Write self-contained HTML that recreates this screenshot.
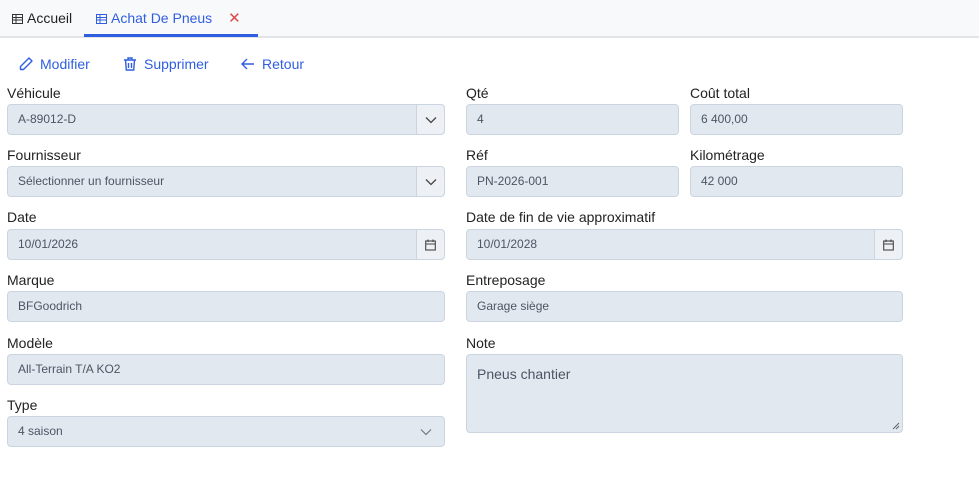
<!DOCTYPE html>
<html><head><style>
*{box-sizing:border-box;margin:0;padding:0}
body{width:979px;height:477px;background:#fff;font-family:"Liberation Sans",sans-serif;position:relative;overflow:hidden;color:#222}
.tabs{position:absolute;left:0;top:0;width:979px;height:38px;background:#f8f9fa;border-bottom:2px solid #e2e4e8}
.tab{position:absolute;top:0;height:37px;line-height:36px;font-size:14px}
.act{position:absolute;top:9px;font-size:14px;color:#2f5fe0}
.act svg{vertical-align:-3px;margin-right:6px}
.lbl{position:absolute;font-size:14px;color:#222}
.in{position:absolute;height:31px;background:#e2e8f0;border:1px solid #cbd5e1;border-radius:4px;font-size:12px;color:#4b5563;line-height:29px;padding-left:10px}
.btn{position:absolute;right:0;top:0;width:28px;height:29px;background:#edf1f6;border-left:1px solid #cbd5e1;border-radius:0 4px 4px 0;display:flex;align-items:center;justify-content:center}
</style></head><body>
<div class="tabs">
<div class="tab" style="left:12px;color:#222"><svg width="11" height="10" style="vertical-align:-1px;margin-right:4px"><rect x="0.5" y="0.5" width="10" height="9" fill="none" stroke="#333"/><path d="M1 3.5h9M1 6h9M4 1v8" stroke="#333"/></svg>Accueil</div>
<div class="tab" style="left:84px;width:174px;border-bottom:3px solid #2f5fe0;padding-left:12px;color:#2f5fe0"><svg width="11" height="10" style="vertical-align:-1px;margin-right:4px"><rect x="0.5" y="0.5" width="10" height="9" fill="none" stroke="#2f5fe0"/><path d="M1 3.5h9M1 6h9M4 1v8" stroke="#2f5fe0"/></svg>Achat De Pneus<span style="color:#e04848;margin-left:16px;font-size:15px">✕</span></div>
</div>
<div class="act" style="left:18px;top:56px"><svg width="16" height="16" viewBox="0 0 16 16"><path d="M11 2l3 3-8.5 8.5H2.5v-3z" fill="none" stroke="#2f5fe0" stroke-width="1.4" stroke-linejoin="round"/></svg>Modifier</div>
<div class="act" style="left:122px;top:56px"><svg width="16" height="16" viewBox="0 0 16 16"><path d="M2 4h12M6 4V2h4v2M3.5 4l.8 10h7.4l.8-10M6.5 7v5M9.5 7v5" fill="none" stroke="#2f5fe0" stroke-width="1.4"/></svg>Supprimer</div>
<div class="act" style="left:240px;top:56px"><svg width="16" height="16" viewBox="0 0 16 16"><path d="M14 8H2.5M7 3L2 8l5 5" fill="none" stroke="#2f5fe0" stroke-width="1.4"/></svg>Retour</div>

<div class="lbl" style="left:7px;top:85px">Véhicule</div>
<div class="in" style="left:7px;top:104px;width:438px">A-89012-D<div class="btn"><svg width="12" height="8"><path d="M1 1.5l5 5 5-5" fill="none" stroke="#444" stroke-width="1.3"/></svg></div></div>
<div class="lbl" style="left:466px;top:85px">Qté</div>
<div class="in" style="left:466px;top:104px;width:213px">4</div>
<div class="lbl" style="left:690px;top:85px">Coût total</div>
<div class="in" style="left:690px;top:104px;width:213px">6 400,00</div>

<div class="lbl" style="left:7px;top:147px">Fournisseur</div>
<div class="in" style="left:7px;top:166px;width:438px">Sélectionner un fournisseur<div class="btn"><svg width="12" height="8"><path d="M1 1.5l5 5 5-5" fill="none" stroke="#444" stroke-width="1.3"/></svg></div></div>
<div class="lbl" style="left:466px;top:147px">Réf</div>
<div class="in" style="left:466px;top:166px;width:213px">PN-2026-001</div>
<div class="lbl" style="left:690px;top:147px">Kilométrage</div>
<div class="in" style="left:690px;top:166px;width:213px">42 000</div>

<div class="lbl" style="left:7px;top:209px">Date</div>
<div class="in" style="left:7px;top:229px;width:438px">10/01/2026<div class="btn"><svg width="11" height="12"><rect x="0.7" y="2" width="9.6" height="9" fill="none" stroke="#444" stroke-width="1.1"/><path d="M1 5h9M3 0.5v2.5M8 0.5v2.5" stroke="#444" stroke-width="1.1"/></svg></div></div>
<div class="lbl" style="left:466px;top:209px">Date de fin de vie approximatif</div>
<div class="in" style="left:466px;top:229px;width:437px">10/01/2028<div class="btn"><svg width="11" height="12"><rect x="0.7" y="2" width="9.6" height="9" fill="none" stroke="#444" stroke-width="1.1"/><path d="M1 5h9M3 0.5v2.5M8 0.5v2.5" stroke="#444" stroke-width="1.1"/></svg></div></div>

<div class="lbl" style="left:7px;top:272px">Marque</div>
<div class="in" style="left:7px;top:291px;width:438px">BFGoodrich</div>
<div class="lbl" style="left:466px;top:272px">Entreposage</div>
<div class="in" style="left:466px;top:291px;width:437px">Garage siège</div>

<div class="lbl" style="left:7px;top:335px">Modèle</div>
<div class="in" style="left:7px;top:354px;width:438px">All-Terrain T/A KO2</div>
<div class="lbl" style="left:466px;top:335px">Note</div>
<div class="in" style="left:466px;top:354px;width:437px;height:79px;font-size:14px;line-height:18px;padding-top:10px">Pneus chantier<svg width="8" height="8" style="position:absolute;right:2px;bottom:2px"><path d="M7 1L1 7M7 4L4 7" stroke="#666"/></svg></div>

<div class="lbl" style="left:7px;top:397px">Type</div>
<div class="in" style="left:7px;top:416px;width:438px">4 saison<svg width="12" height="8" style="position:absolute;right:12px;top:11px"><path d="M1 1.5l5 5 5-5" fill="none" stroke="#777" stroke-width="1.2"/></svg></div>
</body></html>
